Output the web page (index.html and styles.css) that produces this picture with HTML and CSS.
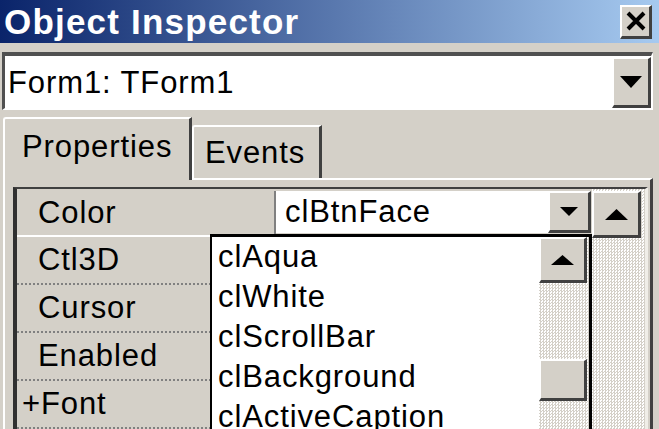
FILE: index.html
```html
<!DOCTYPE html>
<html lang="en">
<head>
    <meta charset="UTF-8">
    <title>Object Inspector</title>
    <link rel="stylesheet" href="styles.css">
</head>
<body>
    <div class="window">
        <div class="titlebar">
            <span class="title">Object Inspector</span>
            <span class="close">
                <svg width="22" height="20" viewBox="0 0 22 20"><path d="M3 2 L19 18 M19 2 L3 18" stroke="#000" stroke-width="4"/></svg>
            </span>
        </div>

        <div class="combo">
            <span class="combo-text">Form1: TForm1</span>
            <span class="btn combo-btn">
                <svg width="22" height="12" viewBox="0 0 22 12"><polygon points="0,0 22,0 11,12" fill="#000"/></svg>
            </span>
        </div>

        <div class="tabs">
            <div class="tab active">Properties</div>
            <div class="tab">Events</div>
        </div>

        <div class="page">
            <div class="grid">
                <div class="props">
                    <div class="row selected">
                        <div class="name">Color</div>
                        <div class="value">
                            <span class="value-text">clBtnFace</span>
                            <span class="btn value-btn">
                                <svg width="18" height="9" viewBox="0 0 18 9"><polygon points="0,0 18,0 9,9" fill="#000"/></svg>
                            </span>
                        </div>
                    </div>
                    <div class="row"><div class="name">Ctl3D</div><div class="value"></div></div>
                    <div class="row"><div class="name">Cursor</div><div class="value"></div></div>
                    <div class="row"><div class="name">Enabled</div><div class="value"></div></div>
                    <div class="row"><div class="name plus">+Font</div><div class="value"></div></div>
                </div>
                <div class="vscroll track">
                    <span class="btn scroll-btn">
                        <svg width="23" height="11" viewBox="0 0 23 11"><polygon points="0,11 23,11 11.5,0" fill="#000"/></svg>
                    </span>
                </div>
            </div>

            <!-- open colour list of the Color property -->
            <div class="droplist">
                <ul class="items">
                    <li>clAqua</li>
                    <li>clWhite</li>
                    <li>clScrollBar</li>
                    <li>clBackground</li>
                    <li>clActiveCaption</li>
                </ul>
                <div class="list-scroll track">
                    <span class="btn list-up">
                        <svg width="23" height="10" viewBox="0 0 23 10"><polygon points="0,10 23,10 11.5,0" fill="#000"/></svg>
                    </span>
                    <span class="btn thumb"></span>
                </div>
            </div>
        </div>
    </div>
</body>
</html>
```

FILE: styles.css
```css
/* Global styles */
* {
    box-sizing: border-box;
}

body {
    margin: 0;
    width: 659px;
    height: 429px;
    overflow: hidden;
    background-color: #d4d0c8;
    font-family: "Liberation Sans", Arial, sans-serif;
    font-size: 31px;
    letter-spacing: 0.9px;
    color: #000;
}

.window {
    display: flex;
    flex-direction: column;
    height: 429px;
    overflow: hidden;
}

/* Raised 3D button */
.btn {
    display: flex;
    align-items: center;
    justify-content: center;
    background-color: #d4d0c8;
    border-style: solid;
    border-width: 2px 3px 3px 2px;
    border-color: #fff #404040 #404040 #fff;
}

/* Title bar */
.titlebar {
    height: 43px;
    flex-shrink: 0;
    display: flex;
    align-items: center;
    justify-content: space-between;
    padding: 0 7px 0 4px;
    background: linear-gradient(to right, #0a246a, #a6caf0);
}

.title {
    color: #fff;
    font-weight: bold;
    font-size: 35px;
    letter-spacing: 1.2px;
}

.close {
    width: 32px;
    height: 34px;
    display: flex;
    align-items: center;
    justify-content: center;
    background-color: #d4d0c8;
    border-style: solid;
    border-width: 2px 3px 3px 2px;
    border-color: #fff #404040 #404040 #fff;
}

/* Object selector */
.combo {
    flex-shrink: 0;
    height: 58px;
    margin: 9px 6px 0 2px;
    display: flex;
    align-items: stretch;
    background-color: #fff;
    border-style: solid;
    border-width: 4px 2px 2px 3px;
    border-color: #505050 #fff #fff #505050;
}

.combo-text {
    flex: 1;
    display: flex;
    align-items: center;
    padding-left: 3px;
    padding-top: 1px;
}

.combo-btn {
    width: 39px;
    margin: 1px 0 0;
}

/* Tabs */
.tabs {
    flex-shrink: 0;
    display: flex;
    align-items: flex-end;
    margin-top: 7px;
    padding-left: 3px;
}

.tab {
    height: 53px;
    width: 130px;
    display: flex;
    align-items: center;
    padding-left: 11px;
    background-color: #d4d0c8;
    border-style: solid;
    border-width: 2px 3px 0 2px;
    border-color: #fff #404040 #fff #fff;
    border-top-left-radius: 3px;
}

.tab.active {
    position: relative;
    z-index: 1;
    height: 63px;
    width: 189px;
    padding-left: 17px;
    padding-bottom: 6px;
    margin-bottom: -2px;
}

/* Tab page */
.page {
    position: relative;
    flex: 1;
    display: flex;
    margin: 0 6px 0 3px;
    padding: 7px 2px 0 8px;
    border-style: solid;
    border-width: 2px 3px 0 2px;
    border-color: #fff #404040 #fff #fff;
}

.grid {
    flex: 1;
    display: flex;
    border-style: solid;
    border-width: 2px 3px 0 4px;
    border-color: #404040 #f0eee8 #404040 #303030;
}

.props {
    flex: 1;
    display: flex;
    flex-direction: column;
}

.row {
    height: 48px;
    flex-shrink: 0;
    display: flex;
    border-bottom: 2px dotted #808080;
}

.name {
    width: 259px;
    display: flex;
    align-items: center;
    padding-left: 21px;
    border-right: 2px solid #808080;
}

.name.plus {
    padding-left: 5px;
}

.value {
    flex: 1;
    display: flex;
}

.row.selected {
    padding-top: 2px;
    border-bottom: 2px solid #fff;
}

.row.selected .value {
    margin-bottom: 2px;
    background-color: #fff;
}

.value-text {
    flex: 1;
    display: flex;
    align-items: center;
    padding-left: 9px;
}

.value-btn {
    width: 43px;
}

/* Dithered scrollbar track */
.track {
    background-color: #fff;
    background-image: conic-gradient(#d4d0c8 25%, #fff 0 50%, #d4d0c8 0 75%, #fff 0);
    background-size: 3px 3px;
}

.vscroll {
    width: 53px;
    margin-left: 1px;
    padding-top: 2px;
    display: flex;
    flex-direction: column;
}

.scroll-btn {
    width: 49px;
    height: 47px;
}

/* Colour drop-down list */
.droplist {
    position: absolute;
    left: 205px;
    top: 54px;
    width: 382px;
    height: 196px;
    overflow: hidden;
    display: flex;
    background-color: #fff;
    border-style: solid;
    border-width: 3px 3px 0 2px;
    border-color: #000;
}

.items {
    flex: 1;
    margin: 0;
    padding: 0;
    list-style: none;
}

.items li {
    height: 40px;
    display: flex;
    align-items: center;
    padding-left: 6px;
}

.list-scroll {
    width: 50px;
    display: flex;
    flex-direction: column;
}

.list-up {
    width: 48px;
    height: 46px;
}

.thumb {
    width: 48px;
    height: 42px;
    margin-top: 76px;
}
```
